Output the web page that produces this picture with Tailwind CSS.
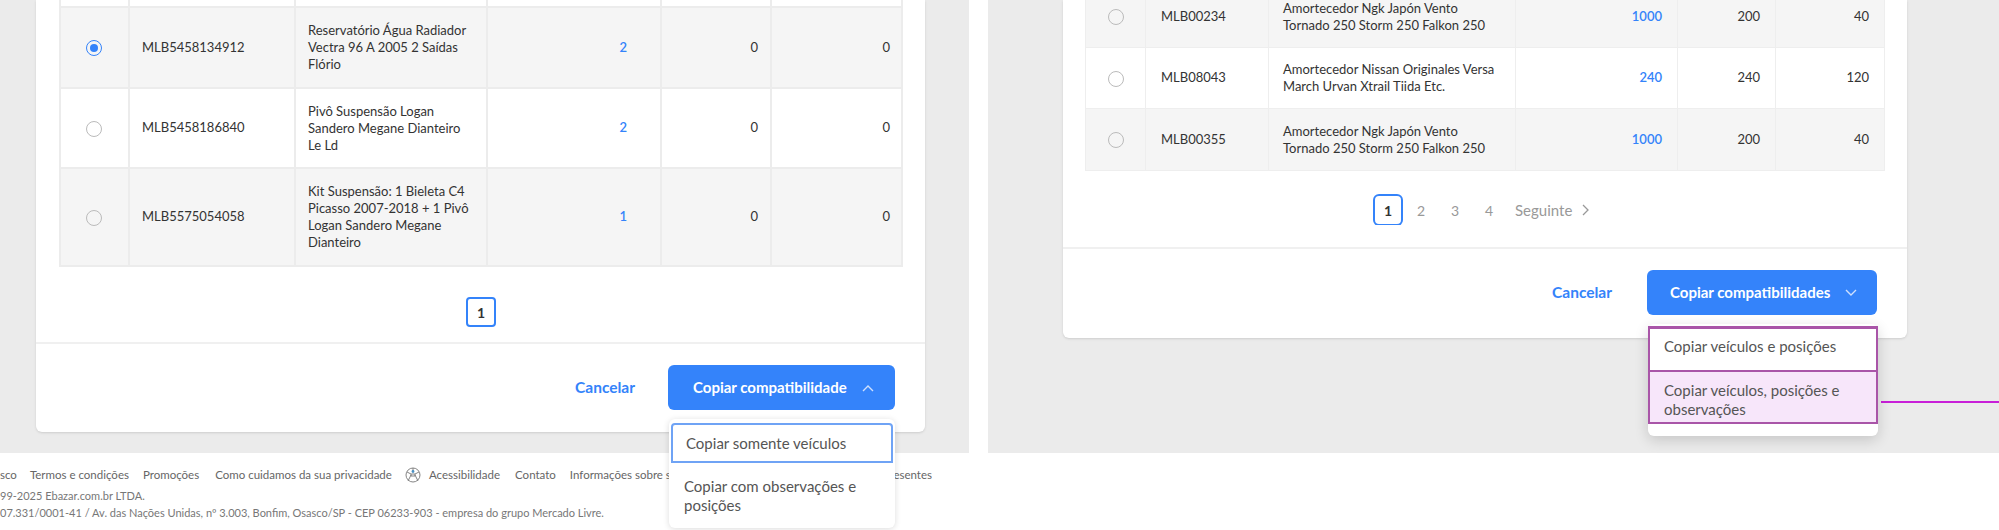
<!DOCTYPE html>
<html lang="en">
<head>
  <meta charset="UTF-8">
  <title>Copiar compatibilidades</title>
  <script src="https://cdn.jsdelivr.net/npm/@tailwindcss/browser@4"></script>
</head>
<body class="bg-white font-['Lato',sans-serif] text-[13px] text-[#333]">
  <div class="relative w-[1999px] h-[530px] overflow-hidden">
    <div class="flex h-[453px] gap-[19px]">

      <!-- left panel -->
      <div class="w-[969px] bg-[#ebebeb] pl-[36px]">
        <div class="w-[889px] h-[432px] bg-white rounded-b-md shadow-sm">
          <div class="pl-[23px] pr-[24px]">
            <table class="w-[842px] table-fixed border-collapse">
              <colgroup>
                <col class="w-[69px]"><col class="w-[166px]"><col class="w-[192px]"><col class="w-[174px]"><col class="w-[110px]"><col class="w-[131px]">
              </colgroup>
              <tbody>
                <tr class="h-[7px]">
                  <td class="border-2 border-t-0 border-[#ececec]"></td><td class="border-2 border-t-0 border-[#ececec]"></td><td class="border-2 border-t-0 border-[#ececec]"></td><td class="border-2 border-t-0 border-[#ececec]"></td><td class="border-2 border-t-0 border-[#ececec]"></td><td class="border-2 border-t-0 border-[#ececec]"></td>
                </tr>
                <tr class="h-[81px] bg-[#f5f5f5]">
                  <td class="border-2 border-[#ececec] pr-[2px] text-center"><span class="inline-flex w-[16px] h-[16px] rounded-full border-[1.5px] border-[#3483fa] items-center justify-center align-middle"><span class="w-[8px] h-[8px] rounded-full bg-[#3483fa]"></span></span></td>
                  <td class="border-2 border-[#ececec] pl-[12px]">MLB5458134912</td>
                  <td class="border-2 border-[#ececec] px-[12px] leading-[17px]">Reservatório Água Radiador Vectra 96 A 2005 2 Saídas Flório</td>
                  <td class="border-2 border-[#ececec] pr-[33px] text-right text-[#3483fa] font-semibold">2</td>
                  <td class="border-2 border-[#ececec] pr-[12px] text-right">0</td>
                  <td class="border-2 border-[#ececec] pr-[11px] text-right">0</td>
                </tr>
                <tr class="h-[80px] bg-white">
                  <td class="border-2 border-[#ececec] pr-[2px] text-center"><span class="inline-block w-[16px] h-[16px] rounded-full border-[1.5px] border-[#bbb] align-middle"></span></td>
                  <td class="border-2 border-[#ececec] pl-[12px]">MLB5458186840</td>
                  <td class="border-2 border-[#ececec] px-[12px] leading-[17px]">Pivô Suspensão Logan Sandero Megane Dianteiro Le Ld</td>
                  <td class="border-2 border-[#ececec] pr-[33px] text-right text-[#3483fa] font-semibold">2</td>
                  <td class="border-2 border-[#ececec] pr-[12px] text-right">0</td>
                  <td class="border-2 border-[#ececec] pr-[11px] text-right">0</td>
                </tr>
                <tr class="h-[98px] bg-[#f5f5f5]">
                  <td class="border-2 border-[#ececec] pr-[2px] text-center"><span class="inline-block w-[16px] h-[16px] rounded-full border-[1.5px] border-[#bbb] align-middle"></span></td>
                  <td class="border-2 border-[#ececec] pl-[12px]">MLB5575054058</td>
                  <td class="border-2 border-[#ececec] px-[12px] leading-[17px]">Kit Suspensão: 1 Bieleta C4 Picasso 2007-2018 + 1 Pivô Logan Sandero Megane Dianteiro</td>
                  <td class="border-2 border-[#ececec] pr-[33px] text-right text-[#3483fa] font-semibold">1</td>
                  <td class="border-2 border-[#ececec] pr-[12px] text-right">0</td>
                  <td class="border-2 border-[#ececec] pr-[11px] text-right">0</td>
                </tr>
              </tbody>
            </table>
            <div class="flex justify-center mt-[30px] pl-[2px]">
              <span class="w-[30px] h-[30px] flex items-center justify-center rounded border-2 border-[#3483fa] font-bold text-[14px]">1</span>
            </div>
          </div>
          <div class="mt-[15px] border-t-2 border-[#f0f0f0]"></div>
          <div class="flex justify-end items-center gap-[33px] pt-[21px] pr-[30px]">
            <span class="text-[#3483fa] font-bold text-[15.5px]">Cancelar</span>
            <div class="relative z-10">
              <button class="w-[227px] h-[45px] rounded-md bg-[#3483fa] text-white font-bold text-[15px] flex items-center pl-[25px] gap-[14px]">
                Copiar compatibilidade
                <svg class="w-[14px] h-[8px]" viewBox="0 0 14 8" fill="none" stroke="#cfe0fd" stroke-width="1.4"><path d="M2 7l5-5 5 5"/></svg>
              </button>
              <div class="absolute top-[54px] left-[1px] w-[226px] h-[109px] bg-white rounded-md shadow-[0_1px_6px_rgba(0,0,0,0.14)] p-[2px] pt-[4px] text-[15px] text-[#555]">
                <div class="h-[40px] flex items-center pl-[13px] border-2 border-[#6fa3f5] rounded-t-sm">Copiar somente veículos</div>
                <div class="pl-[13px] pr-[10px] pt-[14px] leading-[19px]">Copiar com observações e posições</div>
              </div>
            </div>
          </div>
        </div>
      </div>

      <!-- right panel -->
      <div class="flex-1 bg-[#ebebeb] pl-[75px]">
        <div class="w-[844px] h-[338px] bg-white rounded-b-md shadow-sm">
          <div class="h-[225px] overflow-hidden pl-[22px] pr-[23px]">
            <table class="w-[799px] -mt-[15px] table-fixed border-collapse">
              <colgroup>
                <col class="w-[60px]"><col class="w-[123px]"><col class="w-[247px]"><col class="w-[162px]"><col class="w-[98px]"><col class="w-[109px]">
              </colgroup>
              <tbody>
                <tr class="h-[62px] bg-[#f5f5f5]">
                  <td class="border border-[#eee] text-center"><span class="inline-block w-[16px] h-[16px] rounded-full border-[1.5px] border-[#bbb] align-middle"></span></td>
                  <td class="border border-[#eee] pl-[15px]">MLB00234</td>
                  <td class="border border-[#eee] pl-[14px] pr-[8px] leading-[17px]">Amortecedor Ngk Japón Vento Tornado 250 Storm 250 Falkon 250</td>
                  <td class="border border-[#eee] pr-[15px] text-right text-[#3483fa] font-semibold">1000</td>
                  <td class="border border-[#eee] pr-[15px] text-right">200</td>
                  <td class="border border-[#eee] pr-[15px] text-right">40</td>
                </tr>
                <tr class="h-[61px] bg-white">
                  <td class="border border-[#eee] text-center"><span class="inline-block w-[16px] h-[16px] rounded-full border-[1.5px] border-[#bbb] align-middle"></span></td>
                  <td class="border border-[#eee] pl-[15px]">MLB08043</td>
                  <td class="border border-[#eee] pl-[14px] pr-[8px] leading-[17px]">Amortecedor Nissan Originales Versa March Urvan Xtrail Tiida Etc.</td>
                  <td class="border border-[#eee] pr-[15px] text-right text-[#3483fa] font-semibold">240</td>
                  <td class="border border-[#eee] pr-[15px] text-right">240</td>
                  <td class="border border-[#eee] pr-[15px] text-right">120</td>
                </tr>
                <tr class="h-[62px] bg-[#f5f5f5]">
                  <td class="border border-[#eee] text-center"><span class="inline-block w-[16px] h-[16px] rounded-full border-[1.5px] border-[#bbb] align-middle"></span></td>
                  <td class="border border-[#eee] pl-[15px]">MLB00355</td>
                  <td class="border border-[#eee] pl-[14px] pr-[8px] leading-[17px]">Amortecedor Ngk Japón Vento Tornado 250 Storm 250 Falkon 250</td>
                  <td class="border border-[#eee] pr-[15px] text-right text-[#3483fa] font-semibold">1000</td>
                  <td class="border border-[#eee] pr-[15px] text-right">200</td>
                  <td class="border border-[#eee] pr-[15px] text-right">40</td>
                </tr>
              </tbody>
            </table>
            <div class="flex items-center ml-[288px] mt-[23px] text-[14px] text-[#999]">
              <span class="w-[30px] h-[32px] flex items-center justify-center rounded-md border-2 border-[#3483fa] font-bold text-[#333]">1</span>
              <span class="w-[34px] ml-[1px] text-center">2</span>
              <span class="w-[34px] text-center">3</span>
              <span class="w-[34px] text-center">4</span>
              <span class="ml-[9px] text-[15px]">Seguinte</span>
              <svg class="ml-[9px] w-[8px] h-[12px]" viewBox="0 0 8 12" fill="none" stroke="#999" stroke-width="1.3"><path d="M2 1l5 5-5 5"/></svg>
            </div>
          </div>
          <div class="mt-[22px] border-t-2 border-[#f0f0f0]"></div>
          <div class="flex justify-end items-center gap-[35px] pt-[21px] pr-[30px]">
            <span class="text-[#3483fa] font-bold text-[15.5px]">Cancelar</span>
            <div class="relative z-10">
              <button class="w-[230px] h-[45px] rounded-md bg-[#3483fa] text-white font-bold text-[15px] flex items-center pl-[23px] gap-[14px]">
                Copiar compatibilidades
                <svg class="w-[14px] h-[8px]" viewBox="0 0 14 8" fill="none" stroke="#cfe0fd" stroke-width="1.4"><path d="M2 1l5 5 5-5"/></svg>
              </button>
              <div class="absolute top-[54px] left-[1px] w-[230px] h-[112px] bg-white rounded-md shadow-[0_4px_14px_rgba(0,0,0,0.16)] text-[15px] text-[#555]">
                <div class="h-[46px] mt-[2px] pt-[6px] pl-[14px] border-2 border-t-[3px] border-[#a955a8]">Copiar veículos e posições</div>
                <div class="h-[52px] pl-[14px] pt-[9px] leading-[19px] bg-[#f7e6fa] border-2 border-t-0 border-[#a955a8] overflow-hidden">Copiar veículos, posições e observações</div>
              </div>
            </div>
          </div>
        </div>
      </div>
    </div>

    <!-- annotation line -->
    <div class="absolute left-[1881px] top-[401px] w-[118px] h-[2px] bg-[#c81fd8]"></div>

    <!-- footer -->
    <footer class="pt-[15px] text-[11.5px] text-[#666] w-[932px]">
      <div class="flex items-center h-[14px]">
        <span>sco</span>
        <span class="ml-[13px]">Termos e condições</span>
        <span class="ml-[14px]">Promoções</span>
        <span class="ml-[16px]">Como cuidamos da sua privacidade</span>
        <svg class="ml-[13px] w-[16px] h-[16px]" viewBox="0 0 16 16" fill="none" stroke="#777" stroke-width="0.9">
          <circle cx="8" cy="8" r="7"/>
          <path d="M8 1v3M2 5l4 2M14 5l-4 2M6 8l-3 6M10 8l3 6M6 7h4v2H6z"/>
          <circle cx="8" cy="4.5" r="1.4" fill="#4a90c2" stroke="none"/>
        </svg>
        <span class="ml-[8px]">Acessibilidade</span>
        <span class="ml-[15px]">Contato</span>
        <span class="ml-[14px]">Informações sobre seguros</span>
        <span class="ml-auto">Lista de presentes</span>
      </div>
      <p class="mt-[7px] leading-[14px] text-[11px] text-[#777]">99-2025 Ebazar.com.br LTDA.</p>
      <p class="mt-[3px] leading-[14px] text-[11px] text-[#777]">07.331/0001-41 / Av. das Nações Unidas, nº 3.003, Bonfim, Osasco/SP - CEP 06233-903 - empresa do grupo Mercado Livre.</p>
    </footer>
  </div>
</body>
</html>
